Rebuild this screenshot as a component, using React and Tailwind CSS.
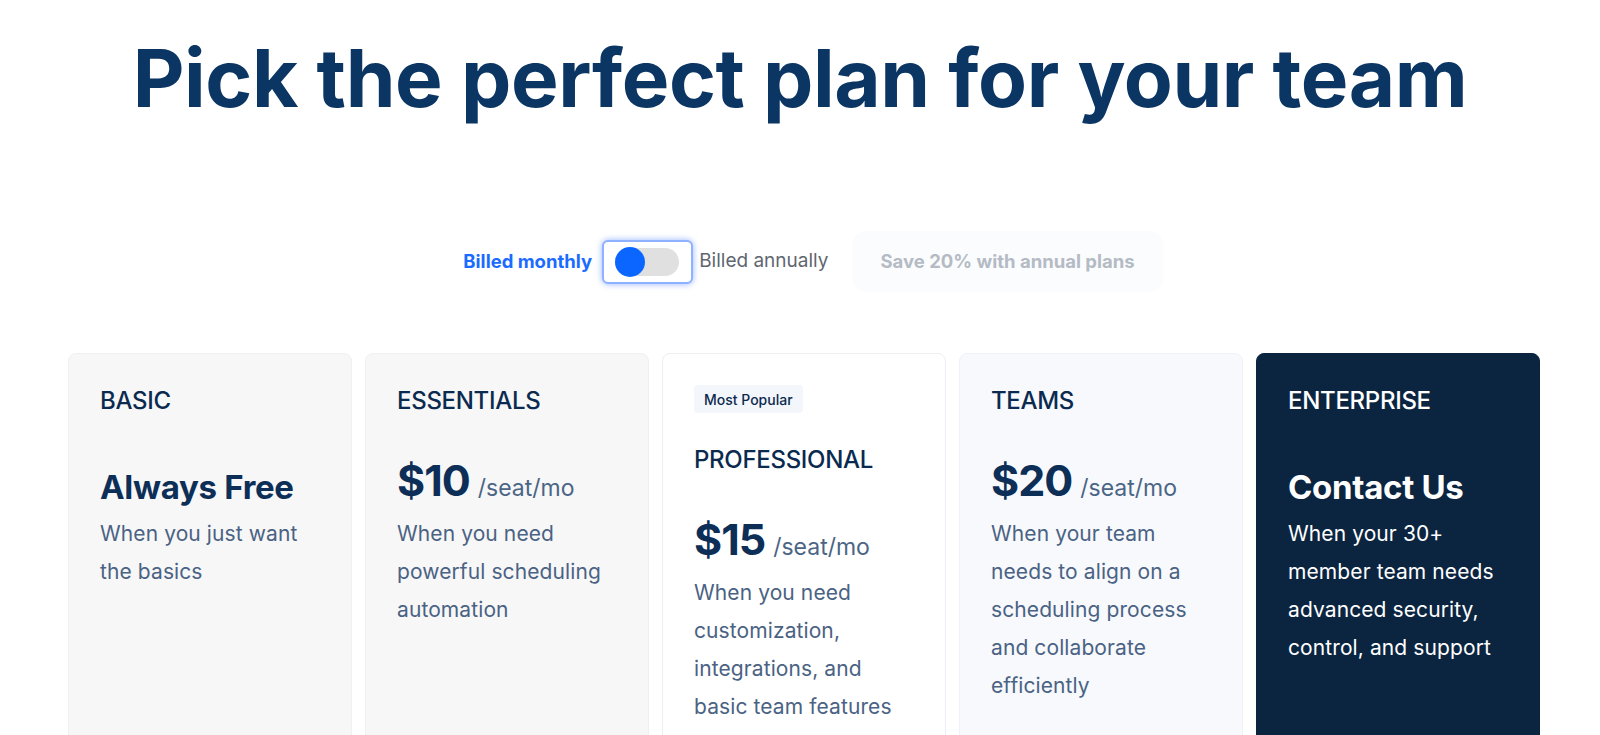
import React, { useState } from 'react';

const plans = [
  {
    name: 'BASIC',
    price: 'Always Free',
    desc: ['When you just want', 'the basics'],
    card: 'bg-[#f7f7f8] border-[#f0f0f2]',
  },
  {
    name: 'ESSENTIALS',
    price: '$10',
    desc: ['When you need', 'powerful scheduling', 'automation'],
    card: 'bg-[#f7f7f8] border-[#f0f0f2]',
  },
  {
    name: 'PROFESSIONAL',
    price: '$15',
    badge: 'Most Popular',
    desc: ['When you need', 'customization,', 'integrations, and', 'basic team features'],
    card: 'bg-white border-[#eceef2]',
  },
  {
    name: 'TEAMS',
    price: '$20',
    desc: ['When your team', 'needs to align on a', 'scheduling process', 'and collaborate', 'efficiently'],
    card: 'bg-[#f7f9fd] border-[#eff2f8]',
  },
  {
    name: 'ENTERPRISE',
    price: 'Contact Us',
    desc: ['When your 30+', 'member team needs', 'advanced security,', 'control, and support'],
    card: 'bg-[#0b2541] border-[#0b2541]',
    dark: true,
  },
];

const PlanCard = ({ plan }) => {
  const isNumber = plan.price.startsWith('$');
  return (
    <div className={`h-[420px] rounded-[8px] border px-[31px] pt-[31px] ${plan.card}`}>
      {plan.badge && (
        <div className="mb-[31px] inline-flex h-[28px] items-center rounded-[4px] bg-[#f3f6fa] px-[10px] text-[14px] font-medium text-[#0b2a4f]">
          {plan.badge}
        </div>
      )}
      <div className={`text-[24px] font-[550] leading-[32px] tracking-[-0.3px] ${plan.dark ? 'text-white' : 'text-[#0b2a4f]'}`}>
        {plan.name}
      </div>
      <div className="mt-[40px] flex h-[46px] items-baseline">
        {isNumber ? (
          <>
            <span className="text-[43px] font-bold leading-[46px] tracking-[-1px] text-[#0d2f57]">{plan.price}</span>
            <span className="ml-[8px] text-[23px] leading-[46px] text-[#4b6585]">/seat/mo</span>
          </>
        ) : (
          <span className={`pt-[7px] text-[33px] font-bold leading-[46px] tracking-[-0.3px] ${plan.dark ? 'text-white' : 'text-[#0d2f57]'}`}>
            {plan.price}
          </span>
        )}
      </div>
      <div className={`mt-[12px] text-[21px] leading-[38px] tracking-[0.1px] ${plan.dark ? 'text-white' : 'text-[#4a6283]'}`}>
        {plan.desc.map((line) => (
          <div key={line}>{line}</div>
        ))}
      </div>
    </div>
  );
};

const App = () => {
  const [annual, setAnnual] = useState(false);

  return (
    <div className="min-h-screen overflow-hidden bg-white font-['Inter',sans-serif]">
      <h1 className="pt-[33px] text-center text-[80px] font-bold leading-[90px] tracking-[-0.4px] text-[#0b3563]">
        Pick the perfect plan for your team
      </h1>

      {/* billing toggle */}
      <div className="mt-[108px] flex items-center justify-center pl-[26px]">
        <span className="text-[18.5px] font-bold text-[#1a6bff]">Billed monthly</span>
        <button
          onClick={() => setAnnual(!annual)}
          className="ml-[10px] flex h-[44px] w-[91px] items-center rounded-[6px] border-2 border-[#8eb2ff] bg-white px-[11px] shadow-[0_0_6px_rgba(80,130,255,0.6)]"
        >
          <div className="relative h-[28px] w-[64px] rounded-full bg-[#e0e0e0]">
            <div
              className={`absolute top-[-1px] h-[30px] w-[30px] rounded-full bg-[#0a66ff] ${annual ? 'left-[34px]' : 'left-0'}`}
            />
          </div>
        </button>
        <span className="ml-[6px] text-[19px] text-[#5f6670]">Billed annually</span>
        <div className="ml-[24px] flex h-[61px] items-center rounded-[14px] bg-[#fbfcfd] px-[28px] text-[18.5px] font-bold text-[#b4bbc5]">
          Save 20% with annual plans
        </div>
      </div>

      {/* plan cards */}
      <div className="ml-[68px] mt-[61px] grid w-[1472px] grid-cols-5 gap-[13px]">
        {plans.map((plan) => (
          <PlanCard key={plan.name} plan={plan} />
        ))}
      </div>
    </div>
  );
};

export default App;
